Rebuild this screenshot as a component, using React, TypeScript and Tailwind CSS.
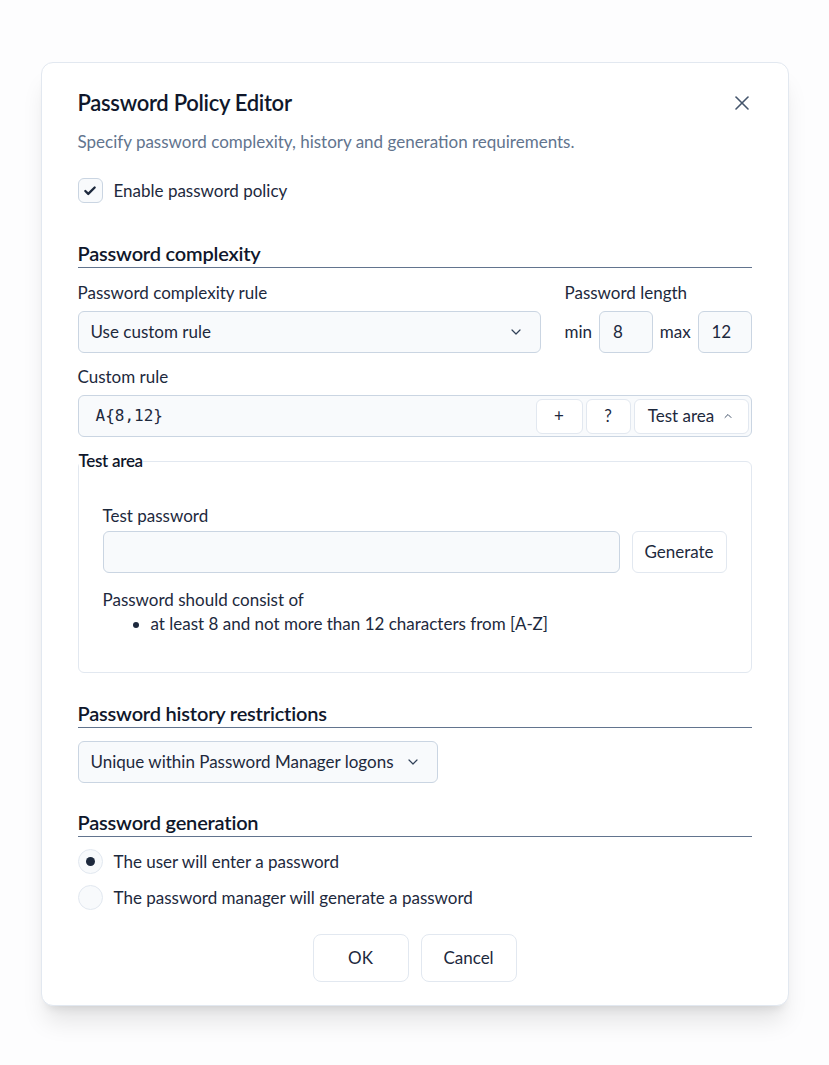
import { Check, ChevronDown, ChevronUp, X } from "lucide-react";

const FONT = "font-['Lato','Noto_Sans',sans-serif]";

function SectionHeading({ children, className = "" }: { children: React.ReactNode; className?: string }) {
  return (
    <h3
      className={`text-[20px] leading-7 font-semibold text-slate-900 border-b border-slate-500 tracking-[-0.2px] ${className}`}
    >
      {children}
    </h3>
  );
}

function Radio({ checked, label }: { checked?: boolean; label: string }) {
  return (
    <label className="flex items-center gap-[11px]">
      <span className="w-[25px] h-[25px] rounded-full border border-slate-200 bg-slate-50 flex items-center justify-center">
        {checked && <span className="w-[9px] h-[9px] rounded-full bg-slate-800" />}
      </span>
      <span className="text-[17px] leading-6 text-slate-800">{label}</span>
    </label>
  );
}

export default function App() {
  return (
    <div className={`min-h-screen bg-[#fdfdfe] pt-[62px] ${FONT}`}>
      <div className="mx-auto w-[748px] bg-white border border-slate-200 rounded-xl shadow-xl px-9 pt-[26px] pb-[23px]">
        <div className="flex items-center justify-between">
          <h2 className="text-[22px] leading-7 font-semibold text-slate-900 tracking-[-0.3px]">
            Password Policy Editor
          </h2>
          <X className="w-6 h-6 text-slate-600 mr-[-2px]" strokeWidth={1.6} />
        </div>
        <p className="mt-[13px] text-[17px] leading-6 text-slate-500">
          Specify password complexity, history and generation requirements.
        </p>
        <label className="mt-6 flex items-center gap-[11px]">
          <span className="w-[25px] h-[25px] rounded-md border border-slate-300 bg-slate-50 flex items-center justify-center">
            <Check className="w-[14px] h-[14px] text-slate-800" strokeWidth={4} />
          </span>
          <span className="text-[17px] leading-6 text-slate-800">Enable password policy</span>
        </label>

        <SectionHeading className="mt-[36px]">Password complexity</SectionHeading>

        <div className="mt-[13px] flex gap-6">
          <div className="flex-1">
            <div className="text-[17px] leading-6 text-slate-800">Password complexity rule</div>
            <div className="mt-[6px] h-[42px] rounded-md border border-slate-300 bg-slate-50 flex items-center justify-between pl-3 pr-4 text-slate-800">
              <span className="text-[17px]">Use custom rule</span>
              <ChevronDown className="w-4 h-4 text-slate-700" strokeWidth={1.8} />
            </div>
          </div>
          <div className="w-[187px]">
            <div className="text-[17px] leading-6 text-slate-800">Password length</div>
            <div className="mt-[6px] flex items-center justify-between text-[17px] text-slate-800">
              <span>min</span>
              <div className="w-[54px] h-[42px] rounded-md border border-slate-300 bg-slate-50 flex items-center px-[13px]">
                8
              </div>
              <span>max</span>
              <div className="w-[54px] h-[42px] rounded-md border border-slate-300 bg-slate-50 flex items-center px-[13px]">
                12
              </div>
            </div>
          </div>
        </div>

        <div className="mt-3 text-[17px] leading-6 text-slate-800">Custom rule</div>
        <div className="mt-[6px] h-[42px] rounded-md border border-slate-300 bg-slate-50 flex items-center justify-between pl-[17px] pr-[2px]">
          <span className="font-['DejaVu_Sans_Mono',monospace] text-[16px] text-slate-800">A{"{8,12}"}</span>
          <div className="flex items-center gap-[3px]">
            <button className="w-[47px] h-[35px] rounded-md border border-slate-200 bg-white text-[17px] text-slate-800">
              +
            </button>
            <button className="w-[45px] h-[35px] rounded-md border border-slate-200 bg-white text-[17px] text-slate-800">
              ?
            </button>
            <button className="w-[115px] h-[35px] rounded-md border border-slate-200 bg-white text-[17px] text-slate-800 flex items-center justify-center gap-2">
              Test area
              <ChevronUp className="w-3 h-3 text-slate-600" strokeWidth={2} />
            </button>
          </div>
        </div>

        <fieldset className="mt-3 border border-slate-200 rounded-md">
          <legend className="text-[17px] leading-6 font-semibold text-slate-900 tracking-[-0.3px]">Test area</legend>
          <div className="px-6 pt-[31px] pb-[36px]">
            <div className="text-[17px] leading-6 text-slate-800">Test password</div>
            <div className="mt-[3px] flex gap-3">
              <div className="flex-1 h-[42px] rounded-md border border-slate-300 bg-slate-50" />
              <button className="w-[95px] h-[42px] rounded-md border border-slate-200 bg-white text-[17px] text-slate-800">
                Generate
              </button>
            </div>
            <div className="mt-[15px] text-[17px] leading-6 text-slate-800">Password should consist of</div>
            <ul className="list-disc pl-12 text-[17px] leading-6 text-slate-800">
              <li>at least 8 and not more than 12 characters from [A-Z]</li>
            </ul>
          </div>
        </fieldset>

        <SectionHeading className="mt-[26px]">Password history restrictions</SectionHeading>
        <div className="mt-[13px] w-[360px] h-[42px] rounded-md border border-slate-300 bg-slate-50 flex items-center gap-[11px] pl-3 text-[17px] text-slate-800">
          Unique within Password Manager logons
          <ChevronDown className="w-4 h-4 text-slate-700" strokeWidth={1.8} />
        </div>

        <SectionHeading className="mt-[25px]">Password generation</SectionHeading>
        <div className="mt-3 flex flex-col gap-[11px]">
          <Radio checked label="The user will enter a password" />
          <Radio label="The password manager will generate a password" />
        </div>

        <div className="mt-6 flex justify-center gap-3">
          <button className="w-[96px] h-[48px] rounded-lg border border-slate-200 bg-white text-[17px] text-slate-800">
            OK
          </button>
          <button className="w-[96px] h-[48px] rounded-lg border border-slate-200 bg-white text-[17px] text-slate-800">
            Cancel
          </button>
        </div>
      </div>
    </div>
  );
}
